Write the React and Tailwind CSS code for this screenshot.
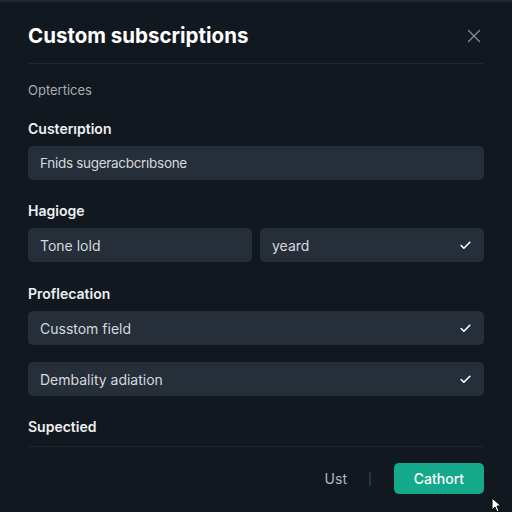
import { X, Check } from 'lucide-react';

const font = { fontFamily: 'Inter, "Liberation Sans", sans-serif' };

function Field({ text, check, className = '' }) {
    return (
        <div className={`h-[34px] rounded-[5px] bg-[#262e39] flex items-center justify-between pl-3 pr-3 ${className}`}>
            <span className="text-[14px] text-[#d5d9de]">{text}</span>
            {check && <Check className="w-[13px] h-[13px] text-white" strokeWidth={3} />}
        </div>
    );
}

function Label({ children, className = '' }) {
    return <div className={`text-[14px] font-semibold text-[#eef0f2] leading-[18px] ${className}`}>{children}</div>;
}

export default function App() {
    return (
        <div className="w-[512px] h-[512px] bg-[#121820] relative overflow-hidden border-t-2 border-[#1f2731]" style={font}>
            <div className="px-[28px]">
                <div className="flex items-center justify-between h-[26px] mt-[21px]">
                    <h1 className="text-[20.5px] font-bold text-white tracking-[0px]">Custom subscriptions</h1>
                    <X className="w-[22px] h-[22px] text-[#8a9099] -mr-[1px]" strokeWidth={1.3} />
                </div>
                <div className="h-px bg-[#1f2630] mt-[14px]" />
                <div className="text-[13px] text-[#a7adb4] leading-[18px] mt-[17px]">Optertices</div>
                <Label className="mt-[21px]">Custerıption</Label>
                <Field text="Fnids sugeracbcrıbsone" className="mt-[8px] [&>span]:text-[13.5px] [&>span]:tracking-[-0.3px]" />
                <Label className="mt-[22px]">Hagioge</Label>
                <div className="flex gap-[8px] mt-[8px]">
                    <Field text="Tone lold" className="flex-1" />
                    <Field text="yeard" check className="flex-1" />
                </div>
                <Label className="mt-[23px]">Proflecation</Label>
                <Field text="Cusstom field" check className="mt-[8px]" />
                <Field text="Dembality adiation" check className="mt-[17px]" />
                <Label className="mt-[22px]">Supectied</Label>
                <div className="h-px bg-[#1c232c] mt-[10px]" />
                <div className="flex items-center justify-end mt-[16px]">
                    <span className="text-[14px] text-[#b4b9bf]">Ust</span>
                    <span className="text-[12px] text-[#4a515a] ml-[21px]">|</span>
                    <button className="ml-[22px] w-[90px] h-[31px] rounded-[5px] bg-[#14a98b] text-white text-[14px] font-medium">Cathort</button>
                </div>
            </div>
            <svg className="absolute left-[491px] top-[495px]" width="10" height="16" viewBox="0 0 10 16">
                <path d="M1 1 L1 13 L4 10 L6 15 L8 14 L6 9 L10 9 Z" fill="white" stroke="black" strokeWidth="1" />
            </svg>
        </div>
    );
}
